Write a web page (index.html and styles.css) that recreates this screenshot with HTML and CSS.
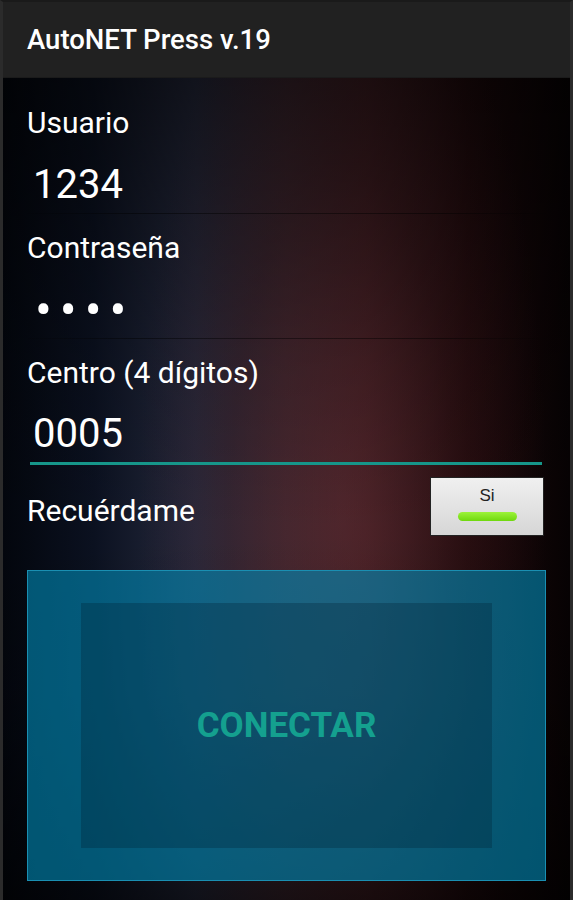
FILE: index.html
```html
<!DOCTYPE html>
<html lang="es">

<head>
  <meta charset="UTF-8">
  <meta name="viewport" content="width=device-width, initial-scale=1.0">
  <title>AutoNET Press v.19</title>
  <link rel="stylesheet" href="styles.css">
</head>

<body>
  <div class="frame">
    <header class="action-bar">AutoNET Press v.19</header>

    <main class="screen">
      <form class="login-form">
        <div class="label">Usuario</div>
        <div class="field">1234</div>

        <div class="label">Contraseña</div>
        <div class="field field-password">••••</div>

        <div class="label">Centro (4 dígitos)</div>
        <div class="field field-active">0005</div>

        <!-- Remember me row -->
        <div class="remember-row">
          <div class="label">Recuérdame</div>
          <div class="toggle">
            <span class="toggle-text">Si</span>
            <span class="toggle-light"></span>
          </div>
        </div>

        <button type="button" class="connect-button">
          <span class="connect-inner">CONECTAR</span>
        </button>
      </form>
    </main>
  </div>
</body>

</html>
```

FILE: styles.css
```css
html,
body {
  margin: 0;
  padding: 0;
  background-color: #1a1a1a;
}

body {
  font-family: 'Roboto', 'Noto Sans', sans-serif;
  color: #fff;
}

.frame {
  width: 567px;
  height: 898px;
  border-top: 2px solid #1a1a1a;
  border-left: 3px solid #2b2b2b;
  border-right: 3px solid #2b2b2b;
  display: flex;
  flex-direction: column;
  overflow: hidden;
}

.action-bar {
  height: 76px;
  flex-shrink: 0;
  background-color: #212121;
  padding-left: 24px;
  display: flex;
  align-items: center;
  font-size: 27.5px;
  font-weight: 500;
  color: #fff;
  box-sizing: border-box;
  border-bottom: 1px solid #1b1b1b;
}

.screen {
  flex: 1;
  background:
    linear-gradient(180deg, rgba(0, 0, 0, 0.55) 0%, rgba(0, 0, 0, 0.15) 35%, rgba(0, 0, 0, 0) 55%, rgba(0, 0, 0, 0.1) 75%, rgba(0, 0, 0, 0.6) 100%),
    radial-gradient(ellipse 36% 75% at 60% 52%, rgba(95, 42, 48, 0.55), rgba(70, 28, 32, 0.3) 55%, rgba(0, 0, 0, 0) 100%),
    linear-gradient(90deg, #03060d 0%, #0b1120 16%, #262a3e 34%, #3a2832 50%, #3c1d22 64%, #1d090b 82%, #060203 100%);
}

.login-form {
  padding: 30px 24px 0;
  display: flex;
  flex-direction: column;
}

.label {
  font-size: 30px;
  line-height: 30px;
  color: #fff;
}

.field {
  margin-top: 19px;
  height: 56px;
  line-height: 56px;
  padding-left: 6px;
  font-size: 40px;
  color: #fff;
  border-bottom: 1px solid transparent;
  border-image: linear-gradient(90deg, rgba(0, 0, 0, 0.1), rgba(0, 0, 0, 0.45) 20%, rgba(0, 0, 0, 0.45) 80%, rgba(0, 0, 0, 0.1)) 1;
  margin-bottom: 19px;
}

.field-password {
  font-size: 50px;
  letter-spacing: 8px;
  padding-left: 8px;
}

.field-active {
  margin-top: 18px;
  margin-left: 3px;
  margin-right: 4px;
  padding-left: 3px;
  border-bottom: 3px solid #16968a;
  border-image: none;
  margin-bottom: 12px;
}

.remember-row {
  display: flex;
  justify-content: space-between;
  align-items: center;
}

.remember-row .label {
  padding-top: 8px;
}

.toggle {
  width: 114px;
  height: 59px;
  box-sizing: border-box;
  margin-right: 2px;
  border: 1px solid #222;
  background: linear-gradient(180deg, #f0f0f0, #d6d6d6);
  display: flex;
  flex-direction: column;
  align-items: center;
  padding-top: 8px;
}

.toggle-text {
  font-family: 'Liberation Sans', Arial, sans-serif;
  font-size: 17px;
  line-height: 20px;
  color: #222;
}

.toggle-light {
  margin-top: 6px;
  width: 59px;
  height: 9px;
  border-radius: 5px;
  background: linear-gradient(180deg, #9cf33a, #6fd80e);
}

.connect-button {
  margin-top: 34px;
  height: 311px;
  padding: 32px 53px 32px 53px;
  border: 1px solid #1a8fb2;
  background-color: rgba(0, 140, 185, 0.6);
  font-family: inherit;
  cursor: pointer;
  display: flex;
}

.connect-inner {
  flex: 1;
  display: flex;
  align-items: center;
  justify-content: center;
  background-color: rgba(0, 30, 45, 0.28);
  font-size: 35px;
  font-weight: 700;
  color: #14a08f;
}
```
